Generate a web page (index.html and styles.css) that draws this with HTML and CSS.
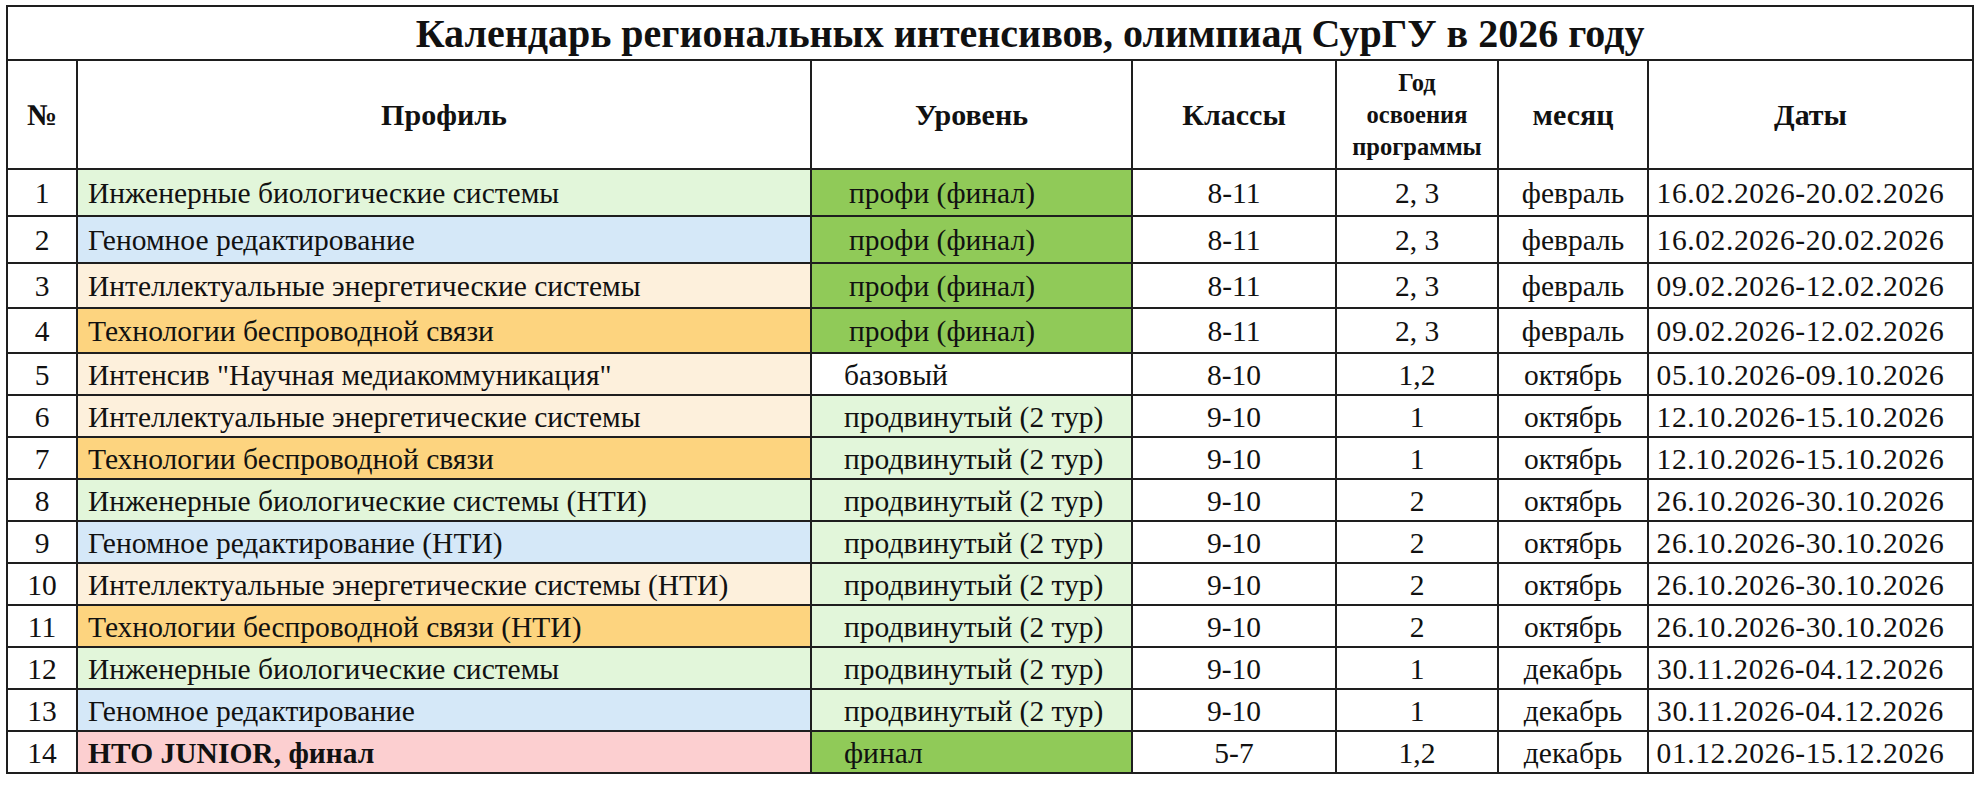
FILE: index.html
```html
<!DOCTYPE html>
<html lang="ru">
<head>
<meta charset="utf-8">
<title>Календарь региональных интенсивов, олимпиад СурГУ в 2026 году</title>
<link rel="stylesheet" href="styles.css">
</head>
<body>
<table class="cal">
  <colgroup>
    <col class="c-num"><col class="c-prof"><col class="c-lvl"><col class="c-cls"><col class="c-year"><col class="c-mon"><col class="c-date">
  </colgroup>
  <thead>
    <tr class="r-title"><th colspan="7" class="title">Календарь региональных интенсивов, олимпиад СурГУ в 2026 году</th></tr>
    <tr class="r-head">
      <th>№</th><th>Профиль</th><th>Уровень</th><th>Классы</th>
      <th class="small">Год<br>освоения<br>программы</th><th>месяц</th><th>Даты</th>
    </tr>
  </thead>
  <tbody>
    <tr class="tall"><td class="n">1</td><td class="p bio">Инженерные биологические системы</td><td class="l pro ind">профи (финал)</td><td class="c">8-11</td><td class="c">2, 3</td><td class="c">февраль</td><td class="d">16.02.2026-20.02.2026</td></tr>
    <tr class="tall"><td class="n">2</td><td class="p gen">Геномное редактирование</td><td class="l pro ind">профи (финал)</td><td class="c">8-11</td><td class="c">2, 3</td><td class="c">февраль</td><td class="d">16.02.2026-20.02.2026</td></tr>
    <tr class="mid"><td class="n">3</td><td class="p ene">Интеллектуальные энергетические системы</td><td class="l pro ind">профи (финал)</td><td class="c">8-11</td><td class="c">2, 3</td><td class="c">февраль</td><td class="d">09.02.2026-12.02.2026</td></tr>
    <tr class="mid"><td class="n">4</td><td class="p wir">Технологии беспроводной связи</td><td class="l pro ind">профи (финал)</td><td class="c">8-11</td><td class="c">2, 3</td><td class="c">февраль</td><td class="d">09.02.2026-12.02.2026</td></tr>
    <tr><td class="n">5</td><td class="p ene">Интенсив "Научная медиакоммуникация"</td><td class="l">базовый</td><td class="c">8-10</td><td class="c">1,2</td><td class="c">октябрь</td><td class="d">05.10.2026-09.10.2026</td></tr>
    <tr><td class="n">6</td><td class="p ene">Интеллектуальные энергетические системы</td><td class="l adv">продвинутый (2 тур)</td><td class="c">9-10</td><td class="c">1</td><td class="c">октябрь</td><td class="d">12.10.2026-15.10.2026</td></tr>
    <tr><td class="n">7</td><td class="p wir">Технологии беспроводной связи</td><td class="l adv">продвинутый (2 тур)</td><td class="c">9-10</td><td class="c">1</td><td class="c">октябрь</td><td class="d">12.10.2026-15.10.2026</td></tr>
    <tr><td class="n">8</td><td class="p bio">Инженерные биологические системы (НТИ)</td><td class="l adv">продвинутый (2 тур)</td><td class="c">9-10</td><td class="c">2</td><td class="c">октябрь</td><td class="d">26.10.2026-30.10.2026</td></tr>
    <tr><td class="n">9</td><td class="p gen">Геномное редактирование (НТИ)</td><td class="l adv">продвинутый (2 тур)</td><td class="c">9-10</td><td class="c">2</td><td class="c">октябрь</td><td class="d">26.10.2026-30.10.2026</td></tr>
    <tr><td class="n">10</td><td class="p ene">Интеллектуальные энергетические системы (НТИ)</td><td class="l adv">продвинутый (2 тур)</td><td class="c">9-10</td><td class="c">2</td><td class="c">октябрь</td><td class="d">26.10.2026-30.10.2026</td></tr>
    <tr><td class="n">11</td><td class="p wir">Технологии беспроводной связи (НТИ)</td><td class="l adv">продвинутый (2 тур)</td><td class="c">9-10</td><td class="c">2</td><td class="c">октябрь</td><td class="d">26.10.2026-30.10.2026</td></tr>
    <tr><td class="n">12</td><td class="p bio">Инженерные биологические системы</td><td class="l adv">продвинутый (2 тур)</td><td class="c">9-10</td><td class="c">1</td><td class="c">декабрь</td><td class="d">30.11.2026-04.12.2026</td></tr>
    <tr><td class="n">13</td><td class="p gen">Геномное редактирование</td><td class="l adv">продвинутый (2 тур)</td><td class="c">9-10</td><td class="c">1</td><td class="c">декабрь</td><td class="d">30.11.2026-04.12.2026</td></tr>
    <tr><td class="n">14</td><td class="p jun"><b>НТО JUNIOR, финал</b></td><td class="l pro">финал</td><td class="c">5-7</td><td class="c">1,2</td><td class="c">декабрь</td><td class="d">01.12.2026-15.12.2026</td></tr>
  </tbody>
</table>
</body>
</html>
```

FILE: styles.css
```css
html, body {
  margin: 0;
  padding: 0;
  background: #ffffff;
}
body {
  padding: 5px 0 0 6px;
  font-family: "Liberation Serif", "Times New Roman", serif;
  color: #111111;
}
.cal {
  border-collapse: collapse;
  table-layout: fixed;
  width: 1966px;
  font-size: 29.5px;
}
.c-num { width: 70px; }
.c-prof { width: 734px; }
.c-lvl { width: 321px; }
.c-cls { width: 204px; }
.c-year { width: 162px; }
.c-mon { width: 150px; }
.c-date { width: 325px; }
.cal th, .cal td {
  border: 2px solid #1e1e1e;
  padding: 0;
  white-space: nowrap;
  overflow: hidden;
  vertical-align: middle;
}
.cal .r-title { height: 54px; }
.cal th.title {
  font-size: 40px;
  font-weight: bold;
  text-align: center;
  padding-left: 80px;
}
.cal .r-head { height: 109px; }
.cal .r-head th {
  font-size: 30px;
  font-weight: bold;
  text-align: center;
}
.cal .r-head th.small {
  font-size: 24.5px;
  line-height: 32px;
}
.cal tbody tr { height: 42px; }
.cal tbody tr.tall { height: 47px; }
.cal tbody tr.mid { height: 45px; }
.cal td { padding-top: 2px; }
.cal td.n { text-align: center; }
.cal td.p { padding-left: 10px; }
.cal td.l { padding-left: 32px; }
.cal td.ind { padding-left: 37px; }
.cal td.c { text-align: center; }
.cal td.d {
  text-align: center;
  letter-spacing: 0.6px;
  padding-right: 20px;
}
.bio { background: #e2f6da; }
.gen { background: #d5e8f8; }
.ene { background: #fdf0dc; }
.wir { background: #fdd47f; }
.jun { background: #fccfd0; }
.pro { background: #90ca58; }
.adv { background: #e2f6da; }
```
